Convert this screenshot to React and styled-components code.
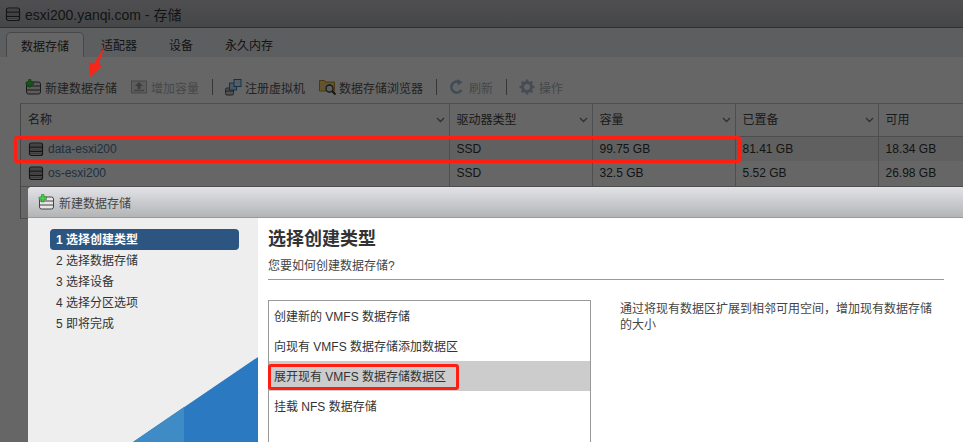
import React from "react";
import styled, { createGlobalStyle } from "styled-components";

const GlobalStyle = createGlobalStyle`
  html, body { margin: 0; padding: 0; background: #fff; }
  body {
    font-family: "Liberation Sans", "Noto Sans CJK SC", sans-serif;
    font-size: 12px;
    color: #555;
  }
`;

const Page = styled.div`
  position: relative;
  width: 963px;
  height: 442px;
  overflow: hidden;
  background: #fff;
`;

const TitleBar = styled.div`
  height: 27px;
  display: flex;
  align-items: center;
  gap: 5px;
  padding-left: 6px;
  font-size: 14px;
  color: #333;
  background: linear-gradient(#c4c5c9, #aeb0b4);
  border-bottom: 1px solid #777;
  box-sizing: content-box;
`;

const TabStrip = styled.div`
  height: 29px;
  display: flex;
  align-items: flex-end;
  padding-left: 6px;
  gap: 2px;
  background: #e9ebef;
`;

const Tab = styled.div`
  height: 25px;
  line-height: 28px;
  padding: 0 15px;
  box-sizing: border-box;
  border-radius: 5px 5px 0 0;
  color: #333;
  ${(p) =>
    p.$active &&
    `
    background: #fff;
    border: 1px solid #b5b5b5;
    border-bottom: 0;
    padding: 0 14px;
  `}
`;

const Toolbar = styled.div`
  height: 46px;
  padding: 14px 0 0 25px;
  box-sizing: border-box;
  display: flex;
  align-items: center;
`;

const ToolButton = styled.div`
  display: flex;
  align-items: center;
  gap: 4px;
  margin-right: 14px;
  color: ${(p) => (p.$disabled ? "#b2b2b2" : "#555")};
`;

const ToolIcon = styled.svg`
  width: ${(p) => p.$w || 16}px;
  height: ${(p) => p.$h || 16}px;
  margin-right: ${(p) => (p.$w > 16 ? 16 - p.$w : 0)}px;
  flex: none;
  overflow: visible;
`;

const Sep = styled.div`
  width: 1px;
  height: 16px;
  margin: 0 12px 0 -1px;
  background: #888;
`;

const TableWrap = styled.div`
  margin-left: 20px;
  width: 1001px;
  height: 116px;
  box-sizing: border-box;
  border: 1px solid #c4c4c4;
  border-left-color: #b0b0b0;
`;

const Table = styled.table`
  width: 100%;
  table-layout: fixed;
  border-collapse: collapse;
`;

const Th = styled.th`
  position: relative;
  box-sizing: border-box;
  height: 32px;
  padding: 0 0 2px 7px;
  text-align: left;
  font-weight: normal;
  color: #444;
  border-right: 1px solid #c4c4c4;
  border-bottom: 1px solid #c4c4c4;
  width: ${(p) => p.$w}px;
  & > svg {
    position: absolute;
    right: 4px;
    top: 13px;
  }
`;

const Td = styled.td`
  height: ${(p) => p.$h}px;
  padding: 0 0 0 7px;
  color: #333;
  font-size: 12px;
  border-right: 1px solid #c4c4c4;
  border-bottom: ${(p) => (p.$last ? "1px solid #c4c4c4" : "0")};
  background: ${(p) => (p.$shade ? "#f0f0f0" : "#fff")};
`;

const NameCell = styled.div`
  display: flex;
  align-items: center;
  gap: 5px;
  padding-left: 1px;
  color: #4b7ba3;
`;

const Dim = styled.div`
  position: absolute;
  inset: 0;
  background: rgba(0, 0, 0, 0.6);
`;

const Modal = styled.div`
  position: absolute;
  left: 28px;
  top: 187px;
  width: 960px;
  height: 255px;
  background: #fff;
  border-radius: 4px 0 0 0;
  overflow: hidden;
`;

const ModalHead = styled.div`
  height: 30px;
  display: flex;
  align-items: center;
  gap: 5px;
  padding-left: 10px;
  color: #444;
  background: linear-gradient(#e2e3e7, #b3b4b6);
  border-bottom: 1px solid #999;
`;

const ModalBody = styled.div`
  display: flex;
  height: 224px;
`;

const Side = styled.div`
  position: relative;
  width: 230px;
  flex: none;
  padding: 11px 19px 0 22px;
  box-sizing: border-box;
  background: #eee;
  overflow: hidden;
`;

const Step = styled.div`
  position: relative;
  height: 21px;
  line-height: 22px;
  padding-left: 6px;
  color: #333;
  ${(p) =>
    p.$active &&
    `
    background: #2c5582;
    color: #fff;
    font-weight: bold;
    border-radius: 4px;
  `}
`;

const SideArt = styled.svg`
  position: absolute;
  left: 0;
  bottom: 0;
`;

const Main = styled.div`
  flex: 1;
  padding: 0 44px 0 10px;
`;

const Heading = styled.div`
  margin-top: 9px;
  height: 24px;
  line-height: 24px;
  font-size: 18px;
  font-weight: bold;
  color: #333;
`;

const Sub = styled.div`
  margin-top: 7px;
  height: 16px;
  line-height: 16px;
  padding-bottom: 5px;
  color: #444;
  border-bottom: 1px solid #999;
`;

const Columns = styled.div`
  display: flex;
  margin-top: 20px;
`;

const OptionList = styled.div`
  width: 323px;
  height: 200px;
  flex: none;
  box-sizing: border-box;
  border: 1px solid #999;
`;

const Option = styled.div`
  height: 30px;
  line-height: 32px;
  padding-left: 5px;
  color: #333;
  background: ${(p) => (p.$selected ? "#ccc" : "transparent")};
`;

const Description = styled.div`
  margin: 1px 0 0 29px;
  width: 320px;
  line-height: 16px;
  color: #444;
`;

const Highlight = styled.div`
  position: absolute;
  left: ${(p) => p.$x}px;
  top: ${(p) => p.$y}px;
  width: ${(p) => p.$w}px;
  height: ${(p) => p.$h}px;
  box-sizing: border-box;
  border: 3px solid #ff1f12;
  border-radius: 3px;
`;

const Arrow = styled.svg`
  position: absolute;
  left: 80px;
  top: 40px;
`;

const Drum = ({ size = 14 }) => (
  <ToolIcon $w={size} $h={size} viewBox="1 1 14 14">
    <rect x="1.500" y="2" width="13" height="12.500" rx="2" fill="#c8c8c8" stroke="#333" strokeWidth="1.200" />
    <path d="M2 6.200h12M2 10.300h12" stroke="#333" strokeWidth="1.200" />
    <path d="M2.500 4h11M2.500 8.200h11M2.500 12.300h11" stroke="#8e8e8e" strokeWidth="1.200" />
  </ToolIcon>
);

const DrumPlus = () => (
  <ToolIcon viewBox="0 0 16 16">
    <rect x="1.500" y="3" width="14" height="12" rx="2" fill="#e6e6e6" stroke="#444" />
    <path d="M2 7h13M2 11h13" stroke="#444" />
    <path d="M3.500.500h2.500v2.500h2.500v2.500H6V8H3.500V5.500H1V3h2.500z" fill="#46d04a" stroke="#1d8a24" strokeWidth=".6" />
  </ToolIcon>
);

const Chevron = () => (
  <svg width="9" height="6" viewBox="0 0 9 6">
    <path d="M1 1l3.500 3.500L8 1" fill="none" stroke="#777" strokeWidth="1.300" />
  </svg>
);

const UploadIcon = () => (
  <ToolIcon viewBox="0 0 16 16">
    <rect x=".5" y="2" width="15" height="12" fill="#e8e8e8" stroke="#b4b4b4" />
    <path d="M8 3l4 4H9.500v3h-3V7H4z" fill="#9a9a9a" />
    <path d="M3 11.500h10" stroke="#a8a8a8" strokeWidth="1.500" />
  </ToolIcon>
);

const VmIcon = () => (
  <ToolIcon $w={18} viewBox="0 0 18 16">
    <rect x="0.500" y="9" width="8" height="7" rx="1.500" fill="#ccc" stroke="#555" />
    <path d="M1 12h7" stroke="#555" />
    <rect x="4.500" y="4" width="7" height="7" fill="#bcd9f2" stroke="#2f7dbd" />
    <rect x="9" y="0.500" width="7" height="7" fill="#d6e9f8" stroke="#2f7dbd" />
  </ToolIcon>
);

const FolderIcon = () => (
  <ToolIcon $w={18} viewBox="0 0 18 16">
    <path d="M.5 1.500h5l1.500 1.500h8.500v9H.5z" fill="#f3d27a" stroke="#b88a2c" />
    <circle cx="10.500" cy="9.500" r="3.500" fill="#e4eef5" stroke="#3c3c3c" strokeWidth="1.300" />
    <path d="M13 12l3.500 3.500" stroke="#333" strokeWidth="2" />
  </ToolIcon>
);

const RefreshIcon = () => (
  <ToolIcon viewBox="0 0 16 16">
    <path d="M12.500 11A5.500 5.500 0 1 1 9 2.700" fill="none" stroke="#9fbcd6" strokeWidth="2.600" />
    <path d="M8.500 0l5 3.200-5 3.200z" fill="#9fbcd6" />
  </ToolIcon>
);

const GearIcon = () => (
  <ToolIcon viewBox="0 0 16 16">
    <circle cx="8" cy="8" r="4.500" fill="none" stroke="#aebfd0" strokeWidth="3" />
    <path
      d="M8 .5v3M8 12.500v3M.5 8h3M12.500 8h3M2.700 2.700l2.100 2.100M11.200 11.200l2.100 2.100M13.300 2.700l-2.100 2.100M4.800 11.200l-2.100 2.100"
      stroke="#aebfd0"
      strokeWidth="2.600"
    />
  </ToolIcon>
);

const columns = [
  { label: "名称", w: 428, sort: true },
  { label: "驱动器类型", w: 143, sort: true },
  { label: "容量", w: 143, sort: true },
  { label: "已置备", w: 143, sort: true },
  { label: "可用", w: 142 },
];

const rows = [
  { name: "data-esxi200", type: "SSD", cap: "99.75 GB", used: "81.41 GB", free: "18.34 GB", h: 24, shade: true },
  { name: "os-esxi200", type: "SSD", cap: "32.5 GB", used: "5.52 GB", free: "26.98 GB", h: 25, last: true },
];

const steps = ["1 选择创建类型", "2 选择数据存储", "3 选择设备", "4 选择分区选项", "5 即将完成"];

const options = [
  "创建新的 VMFS 数据存储",
  "向现有 VMFS 数据存储添加数据区",
  "展开现有 VMFS 数据存储数据区",
  "挂载 NFS 数据存储",
];

export default function App() {
  return (
    <Page>
      <GlobalStyle />
      <TitleBar>
        <Drum />
        esxi200.yanqi.com - 存储
      </TitleBar>
      <TabStrip>
        <Tab $active>数据存储</Tab>
        <Tab>适配器</Tab>
        <Tab>设备</Tab>
        <Tab>永久内存</Tab>
      </TabStrip>
      <Toolbar>
        <ToolButton><DrumPlus />新建数据存储</ToolButton>
        <ToolButton $disabled><UploadIcon />增加容量</ToolButton>
        <Sep />
        <ToolButton><VmIcon />注册虚拟机</ToolButton>
        <ToolButton><FolderIcon />数据存储浏览器</ToolButton>
        <Sep />
        <ToolButton $disabled><RefreshIcon />刷新</ToolButton>
        <Sep />
        <ToolButton $disabled><GearIcon />操作</ToolButton>
      </Toolbar>
      <TableWrap>
        <Table>
          <thead>
            <tr>
              {columns.map((c) => (
                <Th key={c.label} $w={c.w}>
                  {c.label}
                  {c.sort && <Chevron />}
                </Th>
              ))}
            </tr>
          </thead>
          <tbody>
            {rows.map((r) => (
              <tr key={r.name}>
                <Td $h={r.h} $shade={r.shade} $last={r.last}>
                  <NameCell><Drum />{r.name}</NameCell>
                </Td>
                <Td $h={r.h} $shade={r.shade} $last={r.last}>{r.type}</Td>
                <Td $h={r.h} $shade={r.shade} $last={r.last}>{r.cap}</Td>
                <Td $h={r.h} $shade={r.shade} $last={r.last}>{r.used}</Td>
                <Td $h={r.h} $shade={r.shade} $last={r.last}>{r.free}</Td>
              </tr>
            ))}
          </tbody>
        </Table>
      </TableWrap>
      <Dim />
      <Modal>
        <ModalHead><DrumPlus />新建数据存储</ModalHead>
        <ModalBody>
          <Side>
            <SideArt width="230" height="90" viewBox="0 0 230 90">
              <path d="M105 90L230 5V90z" fill="#2a79c1" />
              <path d="M105 90L156 55V90z" fill="#3f8bc6" />
            </SideArt>
            {steps.map((s, i) => (
              <Step key={s} $active={i === 0}>{s}</Step>
            ))}
          </Side>
          <Main>
            <Heading>选择创建类型</Heading>
            <Sub>您要如何创建数据存储?</Sub>
            <Columns>
              <OptionList>
                {options.map((o, i) => (
                  <Option key={o} $selected={i === 2}>{o}</Option>
                ))}
              </OptionList>
              <Description>通过将现有数据区扩展到相邻可用空间，增加现有数据存储的大小</Description>
            </Columns>
          </Main>
        </ModalBody>
      </Modal>
      <Highlight $x={14} $y={136} $w={727} $h={27} />
      <Highlight $x={268} $y={364} $w={191} $h={26} />
      <Arrow width="30" height="40" viewBox="0 0 30 40">
        <path d="M25.500 5L18.500 23.500 22 26 10 37 9.500 22 14 23.500z" fill="#f5271a" />
      </Arrow>
    </Page>
  );
}
